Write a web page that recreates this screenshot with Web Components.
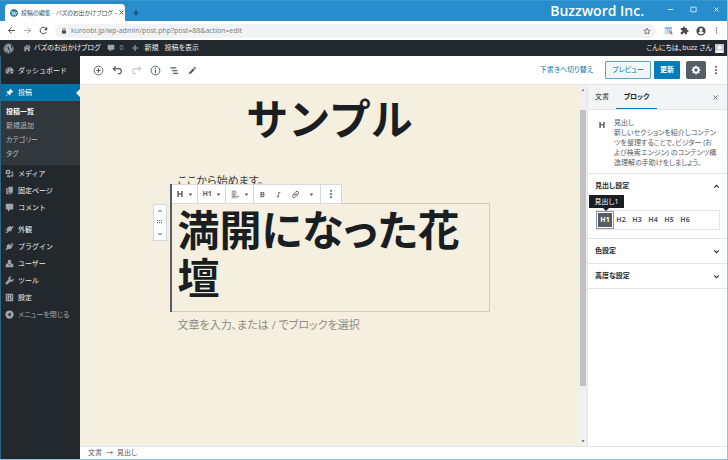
<!DOCTYPE html>
<html lang="ja">
<head>
<meta charset="utf-8">
<meta name="viewport" content="width=device-width, initial-scale=1">
<title>投稿の編集</title>
<style>
html, body { margin: 0; height: 100%; }
body { font: 7px/10px "Open Sans", "Noto Sans CJK JP", sans-serif; font-feature-settings: "palt"; color: #23282d; overflow: hidden; }
</style>
</head>
<body>
<app-window></app-window>
<script>
const RESET = `
*, *::before, *::after { box-sizing: border-box; }
button, input { font: inherit; color: inherit; font-feature-settings: inherit; margin: 0; padding: 0; border: 0; background: none; min-width: 0; }
button { display: inline-flex; align-items: center; justify-content: center; white-space: nowrap; cursor: pointer; }
a { color: inherit; text-decoration: none; }
h1, h2, p, ul { margin: 0; padding: 0; font: inherit; list-style: none; }
`;
function define(name, css, html, setup) {
  customElements.define(name, class extends HTMLElement {
    constructor() {
      super();
      const root = this.attachShadow({ mode: 'open' });
      root.innerHTML = `<style>${RESET}${css}</style>${html}`;
    }
    connectedCallback() { if (setup) setup(this, this.shadowRoot); }
  });
}

const S = 'fill="none" stroke="currentColor"';
const ICONS = {
  wp: `<path d="M12 1a11 11 0 1 0 0 22 11 11 0 0 0 0-22zm0 1.300a9.700 9.700 0 1 1 0 19.400 9.700 9.700 0 0 1 0-19.400z"/><path d="M3.900 8.200 8.400 20.400a9.100 9.100 0 0 1-4.500-12.200zM12 2.900c2.400 0 4.500.9 6.100 2.400-.9.100-1.500.9-1.500 1.700 0 1.600 1.900 2.700 1.900 5.200 0 1.200-.5 2.700-1.100 4.500l-1.100 3.300L12.500 8.900l1.300-.1V8L8 8.100v.7l1.300.1 1.700 4.700-2.300 7L4.900 8.900l1.200-.1V8l-1.800.1A9.100 9.100 0 0 1 12 2.900zM12.200 13l2.700 7.700a9.200 9.200 0 0 1-5.400.1zM20.400 8a9.100 9.100 0 0 1-3.800 11.800l2.700-7.800c.6-1.700.8-2.900 1.100-4z"/>`,
  wpblue: `<circle cx="12" cy="12" r="11.500" fill="#1b78a8"/><circle cx="12" cy="12" r="9.300" ${S} stroke="#dceef6"/><path d="m5 8 4 11 3.500-10L16 19l3.500-10" fill="none" stroke="#fff" stroke-width="2.200"/><path d="M4 8h6m1.500 0h5" stroke="#fff" stroke-width="1.500"/>`,
  close: `<path d="m5 5 14 14M19 5 5 19" ${S} stroke-width="3"/>`,
  plus: `<path d="M12 3v18M3 12h18" ${S} stroke-width="3.500"/>`,
  back: `<path d="M21 12H4m8-8-8 8 8 8" ${S} stroke-width="2.500"/>`,
  forward: `<path d="M3 12h17m-8-8 8 8-8 8" ${S} stroke-width="2.500"/>`,
  reload: `<path d="M19.500 16A8.700 8.700 0 1 1 18 5.800l2 2" ${S} stroke-width="2.600"/><path d="M22 2v9h-9z"/>`,
  lock: `<path d="M4 10h2V7a6 6 0 0 1 12 0v3h2v12H4zm4.500 0h7V7a3.500 3.500 0 0 0-7 0z"/>`,
  star: `<path d="m12 3 2.700 6.300 6.800.6-5.200 4.500 1.600 6.600-5.900-3.500L6.100 21l1.600-6.600-5.200-4.500 6.800-.6z" ${S} stroke-width="2"/>`,
  ext: `<path d="M2 3h19v17H2z" fill="#7cb9e8"/><path d="M4 8h15v10H4z" fill="#edf6fd"/><circle cx="12" cy="12" r="4" fill="#b7d9f2" stroke="#6da8d6" stroke-width="1.500"/><path d="m15 14 7 8" stroke="#e65b4c" stroke-width="4"/>`,
  puzzle: `<path d="M20.500 11H19V7a2 2 0 0 0-2-2h-4V3.500a2.500 2.500 0 0 0-5 0V5H4a2 2 0 0 0-2 2v3.800h1.500a2.700 2.700 0 0 1 0 5.400H2V20c0 1.100.9 2 2 2h3.800v-1.500a2.700 2.700 0 0 1 5.400 0V22H17a2 2 0 0 0 2-2v-4h1.500a2.500 2.500 0 0 0 0-5z"/>`,
  user: `<path fill-rule="evenodd" d="M12 1a11 11 0 1 0 0 22 11 11 0 0 0 0-22zm0 4a4 4 0 1 1 0 8 4 4 0 0 1 0-8zm0 15a8 8 0 0 1-6.600-3.500c0-2.100 4.400-3.200 6.600-3.200s6.600 1.100 6.600 3.200A8 8 0 0 1 12 20z"/>`,
  dots: `<circle cx="12" cy="4" r="2.400"/><circle cx="12" cy="12" r="2.400"/><circle cx="12" cy="20" r="2.400"/>`,
  home: `<path d="M12 2 1 12l2 2 9-8 9 8 2-2-3-2.800V3h-3v3.500zM4 14.500 12 8l8 6.500V22h-5.500v-6h-5v6H4z"/>`,
  comment: `<path d="M4 2h16a2 2 0 0 1 2 2v11a2 2 0 0 1-2 2h-6l-6 6v-6H4a2 2 0 0 1-2-2V4c0-1.100.9-2 2-2z"/>`,
  gauge: `<path fill-rule="evenodd" d="M12 3A11 11 0 0 0 3 20h18A11 11 0 0 0 12 3zm0 2a1.600 1.600 0 1 1 0 3.200A1.600 1.600 0 0 1 12 5zM6.500 7.400a1.600 1.600 0 1 1 0 3.200 1.600 1.600 0 0 1 0-3.200zM4.300 13a1.600 1.600 0 1 1 0 3.200 1.600 1.600 0 0 1 0-3.200zm15.400 0a1.600 1.600 0 1 1 0 3.200 1.600 1.600 0 0 1 0-3.200zM17 7l-3.200 8.500a2.400 2.400 0 1 1-2-.8z"/>`,
  pin: `<path d="m14 2 8 8-2 1.500-1.500-.3-4 4c.6 2 .2 3.800-1 5L9 15.700 3 22l-1-1 6.300-6L3.800 10.500c1.200-1.200 3-1.600 5-1l4-4L12.500 4z"/>`,
  media: `<path fill-rule="evenodd" d="M2 3h3l1-1h4l1 1h3v10H2zm6 2.500a2.500 2.500 0 1 0 0 5 2.500 2.500 0 0 0 0-5zM16 7h6v11a3 3 0 1 1-2-2.800V10h-4zM8 15h2v4a2.500 2.500 0 1 1-2-2.400zM14 15v6a2.200 2.200 0 1 1-2-2.300V15z"/>`,
  pages: `<path d="M9 2h12v16H9zM5 5h2v15h11v2H5z"/><path d="M3 5h2v17H3z"/>`,
  brush: `<path d="m15 2 2 4c2-2 4-3 6-2-1 1-1 3-2 4l-4 4 1 2-3 3-3-2c-2 3-5 6-10 7 1-4 3-7 6-9l-7 1 1-2 5-3-2-2z"/>`,
  plug: `<path d="m14 8 5-6 2 2-5 6 1 1 5-5 1 2-5 5 1 1c-3 5-7 6-10 4l-5 4H2v-3l3-4c-2-3-1-7 4-10z"/>`,
  person: `<path d="M12 2a4.800 4.800 0 0 1 3 8.500c3 .5 7 2 7 6V22H2v-5.500c0-4 4-5.500 7-6A4.800 4.800 0 0 1 12 2z"/><path d="m8 13 4 4 4-4" fill="none" stroke="#23282d" stroke-width="1.500"/>`,
  wrench: `<path d="M22.500 6.500 19 10l-4-1-1-4 3.500-3.500c-6-2-10 3-8 8L1.500 18c-1.500 2.500 2 6 4.500 4.500l8.500-8c5 2 10-2 8-8z"/>`,
  sliders: `<path fill-rule="evenodd" d="M2 2h20v20H2zm3 3v7h2V5zm0 9v5h2v-5zm6-9v3h2V5zm0 6v8h2v-8zm6-6v8h2V5zm0 11v3h2v-3z"/>`,
  collapse: `<path fill-rule="evenodd" d="M12 1a11 11 0 1 0 0 22 11 11 0 0 0 0-22zm3 5v12l-8-6z"/>`,
  add: `<circle cx="12" cy="12" r="9.500" ${S} stroke-width="2"/><path d="M12 7v10M7 12h10" ${S} stroke-width="2.400"/>`,
  undo: `<path d="M8 3 3 8l5 5M3.500 8H15c7 0 7 11 0 11h-2" ${S} stroke-width="2.600"/>`,
  redo: `<path d="m16 3 5 5-5 5m4.500-5H9c-7 0-7 11 0 11h2" ${S} stroke-width="2.600"/>`,
  info: `<circle cx="12" cy="12" r="9.500" ${S} stroke-width="2"/><path d="M10.800 10.500h2.400V18h-2.400zM10.800 6h2.400v2.600h-2.400z"/>`,
  outline: `<path d="M3 5h13v2.400H3zm4 6h11v2.400H7zm2 6h11v2.400H9z"/>`,
  pencil: `<path d="m18 2 4 4-2.500 2.500-4-4zM14 6l4 4L7.500 20.500 2 22l1.500-5.500z"/>`,
  gear: `<path fill-rule="evenodd" d="m10 2-.6 2.600-1.700.8-2.300-1.400-2 2 1.400 2.400-.7 1.600-2.600.6v2.900l2.600.6.7 1.700-1.400 2.300 2 2.100 2.400-1.400 1.600.7.6 2.500h4l.6-2.500 1.700-.7 2.300 1.400 2-2.100-1.400-2.300.8-1.700 2.500-.6v-2.900l-2.500-.6-.8-1.600L20.600 6l-2-2-2.300 1.400-1.700-.8L14 2zm2 6a4 4 0 1 1 0 8 4 4 0 0 1 0-8z"/>`,
  down: `<path d="m4 8 8 8 8-8" ${S} stroke-width="3.500"/>`,
  up: `<path d="m4 16 8-8 8 8" ${S} stroke-width="3.500"/>`,
  caret: `<path d="M3 7h18l-9 12z"/>`,
  caretup: `<path d="M4 17h16L12 6z"/>`,
  grip: `<path d="M0 4h4v4H0zm8 0h4v4H8zm8 0h4v4h-4zM0 12h4v4H0zm8 0h4v4H8zm8 0h4v4h-4z"/>`,
  heading: `<path d="M4 3h4.500v7h7V3H20v18h-4.500v-7.500h-7V21H4z"/>`,
  align: `<path d="M2 2h11v3H2zm0 4.500h14v3H2zM2 11h11v3H2zm0 4.500h20v3H2zM2 20h17v2H2z"/><path d="M2 2h9v20H2z" opacity=".5"/>`,
  bold: `<path fill-rule="evenodd" d="M5 3h8c7 0 7 7 3 8.500 5 1.500 4 9.500-3 9.500H5zm4 3v4h4c3 0 3-4 0-4zm0 7v5h4c3.500 0 3.500-5 0-5z"/>`,
  italic: `<path d="M10 3h9v2.500h-3L11.500 18.500h3V21h-9v-2.500h3L13 5.500h-3z"/>`,
  link: `<path d="m10 14-1-1c-1.500-1.500-1.500-3 0-4.500l4.500-4.500c3-3 9 2 6 6L16 13M14 10l1 1c1.500 1.500 1.500 3 0 4.500L10.500 20c-3 3-9-2-6-6L8 11m1 4 6-6" ${S} stroke-width="2.500"/>`,
  min: `<path d="M3 12h18" ${S} stroke-width="2.500"/>`,
  max: `<path d="M3 4h18v16H3z" ${S} stroke-width="2.500"/>`,
  avatar: `<path d="M0 0h24v24H0z" fill="#c8c9ca"/><circle cx="12" cy="9" r="5" fill="#fff"/><path d="M2 24c0-10 20-10 20 0z" fill="#fff"/>`
};
customElements.define('ui-icon', class extends HTMLElement {
  connectedCallback() {
    if (!this.shadowRoot) this.attachShadow({ mode: 'open' });
    const s = this.getAttribute('size') || 10;
    this.shadowRoot.innerHTML = `<style>:host{display:inline-flex;flex:none}svg{display:block;fill:currentColor}</style>
      <svg width="${s}" height="${s}" viewBox="0 0 24 24" aria-hidden="true">${ICONS[this.getAttribute('name')] || ''}</svg>`;
  }
});

define('browser-tabs', `
:host { display: flex; height: 21px; background: #288dcc; padding: 4px 7px 0 5px; color: #fff; border-top: 1px solid #3c97cf; }
.tab { display: flex; align-items: center; gap: 3px; width: 120px; height: 17px; padding: 0 2px 0 5px; border-radius: 4px 4px 0 0; background: #fff; color: #45494d; margin-top: -1px; }
.tab span { flex: 1; font-size: 6px; white-space: nowrap; }
.new { margin: -1px 0 0 6px; color: #134a6e; width: 9px; }
.brand { margin: -4px 0 0 auto; font-size: 14px; line-height: 20px; font-weight: 600; white-space: nowrap; }
.win { display: flex; gap: 16px; margin: -8px 0 0 23px; }
`, `<div class="tab"><ui-icon name="wpblue" size="8"></ui-icon><span>投稿の編集 - バズのお出かけブログ –</span><button aria-label="タブを閉じる"><ui-icon name="close" size="7"></ui-icon></button></div>
<button class="new" aria-label="新しいタブ"><ui-icon name="plus" size="8"></ui-icon></button>
<div class="brand">Buzzword Inc.</div>
<div class="win"><button aria-label="最小化"><ui-icon name="min" size="7"></ui-icon></button><button aria-label="最大化"><ui-icon name="max" size="7"></ui-icon></button><button aria-label="閉じる"><ui-icon name="close" size="7"></ui-icon></button></div>`);

define('address-bar', `
:host { display: flex; align-items: center; height: 19px; background: #fff; padding: 0 7px; color: #45494d; gap: 7px; }
.light { color: #a4a7aa; }
.pill { flex: 1; display: flex; align-items: center; gap: 4px; height: 14px; border-radius: 7px; background: #f1f3f4; padding: 0 5px 0 6px; margin-right: 1px; }
.url { flex: 1; height: 12px; color: #777b80; }
`, `<button aria-label="戻る"><ui-icon name="back" size="9"></ui-icon></button><button class="light" aria-label="進む"><ui-icon name="forward" size="9"></ui-icon></button><button aria-label="再読み込み"><ui-icon name="reload" size="9"></ui-icon></button>
<div class="pill"><ui-icon name="lock" size="6"></ui-icon><input class="url" aria-label="アドレス" value="kuroobi.jp/wp-admin/post.php?post=88&amp;action=edit"><button aria-label="ブックマーク"><ui-icon name="star" size="8"></ui-icon></button></div>
<button aria-label="キャプチャ"><ui-icon name="ext" size="9"></ui-icon></button><button aria-label="拡張機能"><ui-icon name="puzzle" size="9"></ui-icon></button><button aria-label="プロフィール"><ui-icon name="user" size="10"></ui-icon></button><button aria-label="メニュー"><ui-icon name="dots" size="7"></ui-icon></button>`);

define('admin-bar', `
:host { display: flex; align-items: center; height: 16px; background: #23282d; color: #eee; padding: 0 3px; white-space: nowrap; }
a { display: flex; align-items: center; gap: 3px; }
ui-icon { color: #a0a5aa; }
.site { margin-left: 9px; } .com { margin-left: 7px; gap: 4px; color: #a0a5aa; } .new { margin-left: 8px; gap: 5px; } .view { margin-left: 6px; } .me { margin-left: auto; }
`, `<a href="#" aria-label="WordPress について"><ui-icon name="wp" size="11"></ui-icon></a><a href="#" class="site"><ui-icon name="home" size="8"></ui-icon>バズのお出かけブログ</a><a href="#" class="com"><ui-icon name="comment" size="8"></ui-icon>0</a><a href="#" class="new"><ui-icon name="plus" size="8"></ui-icon>新規</a><a href="#" class="view">投稿を表示</a><a href="#" class="me">こんにちは、buzz さん<ui-icon name="avatar" size="9"></ui-icon></a>`);

define('menu-item', `
:host { display: block; color: #eee; font-feature-settings: normal; }
a { display: flex; align-items: center; gap: 4px; height: 17px; padding-left: 4px; white-space: nowrap; position: relative; }
ui-icon { color: #a0a5aa; }
:host([current]) a { background: #0073aa; color: #fff; }
:host([current]) ui-icon { color: #fff; }
:host([current]) a::after { content: ""; position: absolute; right: 0; top: 5px; border: solid transparent; border-width: 4px 4px 4px 0; border-right-color: #f5efe0; }
:host([muted]) { color: #a0a5aa; font-feature-settings: "palt"; }
`, `<a href="#"><ui-icon size="9"></ui-icon><slot></slot></a>`, (el, r) => {
  const i = r.querySelector('ui-icon');
  i.setAttribute('name', el.getAttribute('icon'));
  i.connectedCallback();
});

define('admin-menu', `
:host { display: block; background: #23282d; width: 79px; padding-top: 6px; }
.gap { margin-top: 5px; }
ul { background: #32373c; padding: 4px 5px; color: #b4b9be; }
li a { display: block; line-height: 14px; }
.on { color: #fff; font-weight: 700; }
`, `<menu-item icon="gauge">ダッシュボード</menu-item>
<menu-item icon="pin" current class="gap">投稿</menu-item>
<ul><li><a class="on" href="#">投稿一覧</a></li><li><a href="#">新規追加</a></li><li><a href="#">カテゴリー</a></li><li><a href="#">タグ</a></li></ul>
<menu-item icon="media">メディア</menu-item><menu-item icon="pages">固定ページ</menu-item><menu-item icon="comment">コメント</menu-item>
<menu-item icon="brush" class="gap">外観</menu-item><menu-item icon="plug">プラグイン</menu-item><menu-item icon="person">ユーザー</menu-item><menu-item icon="wrench">ツール</menu-item><menu-item icon="sliders">設定</menu-item><menu-item icon="collapse" muted>メニューを閉じる</menu-item>`);

define('editor-header', `
:host { display: flex; align-items: center; height: 29px; border-bottom: 1px solid #e2e4e7; background: #fff; padding: 0 6px 0 13px; color: #555d66; }
.tools { display: flex; gap: 8px; }
.off { color: #c8cbce; }
.act { display: flex; align-items: center; margin-left: auto; }
.link { color: #0073aa; margin-right: 12px; }
.prev { height: 18px; padding: 0 6px; border: 1px solid #5ba4cc; background: #f3f5f6; color: #0073aa; border-radius: 1px; margin-right: 3px; }
.pub { height: 18px; width: 26px; background: #007cba; color: #fff; font-weight: 700; border-radius: 1px; margin-right: 6px; }
.gear { height: 18px; width: 20px; background: #555d66; color: #fff; border-radius: 2px; margin-right: 5px; }
`, `<div class="tools"><button aria-label="ブロックの追加"><ui-icon name="add" size="11"></ui-icon></button><button aria-label="元に戻す"><ui-icon name="undo" size="11"></ui-icon></button><button class="off" aria-label="やり直す"><ui-icon name="redo" size="11"></ui-icon></button><button aria-label="情報"><ui-icon name="info" size="11"></ui-icon></button><button aria-label="ナビゲーション"><ui-icon name="outline" size="11"></ui-icon></button><button aria-label="編集"><ui-icon name="pencil" size="9"></ui-icon></button></div>
<div class="act"><button class="link">下書きへ切り替え</button><button class="prev">プレビュー</button><button class="pub">更新</button><button class="gear" aria-label="設定"><ui-icon name="gear"></ui-icon></button><button aria-label="ツールと設定"><ui-icon name="dots"></ui-icon></button></div>`);

define('block-toolbar', `
:host { display: flex; height: 20px; background: #fff; border: 1px solid #d5d9dc; border-left: 0; color: #555d66; }
div { display: flex; align-items: center; justify-content: center; gap: 4px; padding: 0 4px 0 5px; border-right: 1px solid #d5d9dc; }
div:last-child { border: 0; padding: 0 5px; }
.fmt { gap: 9px; padding: 0 6px 0 5px; }
b { font-weight: 700; }
.g { color: #9aa0a6; }
`, `<div><button aria-label="ブロックタイプ"><ui-icon name="heading" size="8"></ui-icon></button><ui-icon name="caret" size="5"></ui-icon></div>
<div><button><b>H1</b></button><ui-icon name="caret" size="5"></ui-icon></div>
<div><button class="g" aria-label="配置"><ui-icon name="align" size="9"></ui-icon></button><ui-icon name="caret" size="5"></ui-icon></div>
<div class="fmt"><button aria-label="太字"><ui-icon name="bold" size="7"></ui-icon></button><button aria-label="イタリック"><ui-icon name="italic" size="7"></ui-icon></button><button aria-label="リンク"><ui-icon name="link" size="9"></ui-icon></button><button aria-label="その他"><ui-icon name="caret" size="5"></ui-icon></button></div>
<div><button aria-label="オプション"><ui-icon name="dots" size="10"></ui-icon></button></div>`);

define('block-mover', `
:host { display: flex; flex-direction: column; align-items: center; justify-content: space-around; width: 14px; height: 37px; background: #fff; border: 1px solid #d5d9dc; color: #555d66; }
`, `<button aria-label="上に移動"><ui-icon name="up" size="6"></ui-icon></button><ui-icon name="grip" size="6"></ui-icon><button aria-label="下に移動"><ui-icon name="down" size="6"></ui-icon></button>`);

define('editor-canvas', `
:host { display: flex; flex: 1; min-width: 0; background: #f5efe0; color: #191e23; }
main { flex: 1; display: flex; flex-direction: column; align-items: center; overflow: hidden; padding-top: 10px; }
.col { width: 90%; max-width: 320px; }
.title { font-size: 42px; line-height: 48px; font-weight: 700; text-align: center; font-feature-settings: normal; }
p, .more { font-size: 11px; line-height: 16px; padding: 0 8px; }
p { margin-top: 30px; color: #3c3f40; }
.block { position: relative; border: 1px solid #cbcbbf; margin-top: 14px; padding: 2px 7px 9px; }
.block::before { content: ""; position: absolute; left: -1px; top: -20px; bottom: -1px; width: 2px; background: #555d66; z-index: 1; }
.block h1 { font-size: 42px; line-height: 48px; font-weight: 700; outline: 0; }
block-toolbar { position: absolute; left: 0; top: -20px; }
block-mover { position: absolute; left: -18px; top: 0; }
.more { display: block; width: 100%; height: 16px; margin-top: 5px; }
.more::placeholder { color: #8d8b84; opacity: 1; }
.bar { width: 8px; background: #f0f0f0; display: flex; flex-direction: column; align-items: center; padding: 3px 0; color: #505050; }
.thumb { width: 6px; height: 276px; background: #c1c1c1; margin: 18px 0 auto; }
`, `<main><h1 class="title col">サンプル</h1><p class="col">ここから始めます。</p>
<section class="block col"><block-mover></block-mover><block-toolbar></block-toolbar><h1 contenteditable="true" spellcheck="false">満開になった花壇</h1></section>
<div class="col"><input class="more" aria-label="段落" placeholder="文章を入力、または / でブロックを選択"></div></main>
<div class="bar"><ui-icon name="caretup" size="4"></ui-icon><div class="thumb"></div><ui-icon name="caret" size="4"></ui-icon></div>`);

define('panel-section', `
:host { display: block; border-bottom: 1px solid #e2e4e7; }
.head { width: 100%; height: 24px; padding: 0 7px; justify-content: space-between; font-weight: 700; }
`, `<h2><button class="head"><span></span><ui-icon size="7"></ui-icon></button></h2><slot></slot>`, (el, r) => {
  r.querySelector('span').textContent = el.getAttribute('label');
  const open = el.hasAttribute('open'), i = r.querySelector('ui-icon');
  r.querySelector('button').setAttribute('aria-expanded', open);
  i.setAttribute('name', open ? 'up' : 'down');
  i.connectedCallback();
});

define('block-inspector', `
:host { display: block; width: 140px; background: #fff; border-left: 1px solid #e2e4e7; }
.tabs { display: flex; height: 25px; background: #f3f4f5; border-bottom: 1px solid #e2e4e7; padding-right: 8px; }
.tabs button { padding: 0 7px; }
.tabs .on { width: 41px; font-weight: 700; border-bottom: 1px solid #007cba; padding: 1px 0 0; }
.tabs .x { margin-left: auto; padding: 0; color: #555d66; }
.card { display: flex; gap: 8px; padding: 8px 0 5px 10px; border-bottom: 1px solid #e2e4e7; line-height: 10px; color: #555d66; white-space: nowrap; }
.card ui-icon { margin-top: 3px; }
.lv { position: relative; display: flex; margin: 12px 7px 8px 8px; border: 1px solid #e2e4e7; height: 20px; align-items: center; color: #555d66; }
.lv button { width: 16px; height: 16px; font-weight: 700; }
.lv .on { background: #555d66; color: #fff; border: 1px solid #fff; outline: 1px solid #8d96a0; }
.tip { position: absolute; left: -8px; top: -16px; width: 35px; line-height: 13px; background: #191e23; color: #fff; text-align: center; white-space: nowrap; }
.tip::after { content: ""; position: absolute; left: 14px; top: 13px; border: solid transparent; border-width: 3px 3px 0; border-top-color: #191e23; }
`, `<div class="tabs"><button>文書</button><button class="on">ブロック</button><button class="x" aria-label="設定を閉じる"><ui-icon name="close" size="7"></ui-icon></button></div>
<div class="card"><ui-icon name="heading" size="8"></ui-icon><div><h2>見出し</h2><p>新しいセクションを紹介しコンテン<br>ツを整理することで、ビジター (お<br>よび検索エンジン) のコンテンツ構<br>造理解の手助けをしましょう。</p></div></div>
<panel-section label="見出し設定" open><div class="lv"><button class="on" aria-pressed="true">H1</button><button>H2</button><button>H3</button><button>H4</button><button>H5</button><button>H6</button><span class="tip" role="tooltip">見出し1</span></div></panel-section>
<panel-section label="色設定"></panel-section><panel-section label="高度な設定"></panel-section>`);

define('editor-footer', `
:host { display: flex; align-items: center; gap: 4px; height: 13px; border-top: 1px solid #e2e4e7; background: #fff; padding-left: 8px; color: #555d66; }
`, `<button>文書</button><span>→</span><button>見出し</button>`);

define('app-window', `
:host { display: flex; flex-direction: column; height: 100vh; box-sizing: border-box; border: solid #8fc3e3; border-width: 0 1px 1px 0; background: #fff; }
.body { flex: 1; display: flex; min-height: 0; border-left: 1px solid #2a6486; }
.editor { flex: 1; display: flex; flex-direction: column; min-width: 0; }
.work { flex: 1; display: flex; min-height: 0; }
`, `<browser-tabs></browser-tabs><address-bar></address-bar><admin-bar></admin-bar>
<div class="body"><admin-menu></admin-menu><div class="editor"><editor-header></editor-header><div class="work"><editor-canvas></editor-canvas><block-inspector></block-inspector></div><editor-footer></editor-footer></div></div>`);
</script>
</body>
</html>
